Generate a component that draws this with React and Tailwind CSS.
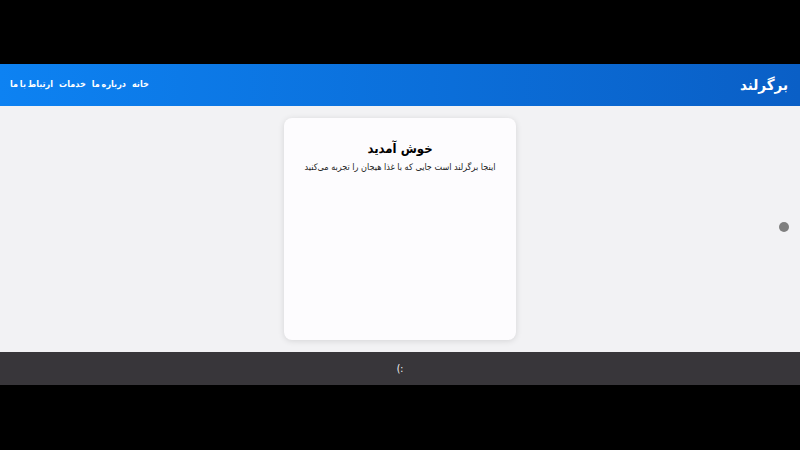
import React from 'react';

export default function App() {
  return (
    <div className="w-[800px] h-[450px] bg-black pt-[64px] overflow-hidden" dir="rtl" style={{ fontFamily: '"DejaVu Sans Condensed", "DejaVu Sans", sans-serif' }}>
      <header className="h-[42px] bg-gradient-to-l from-[#0a5fc6] to-[#0d82f2] flex items-center justify-between pr-[12px] pl-[10px] text-white">
        <div className="text-[15px] font-bold">برگرلند</div>
        <nav className="flex gap-[6px] text-[9px] font-bold [word-spacing:-1px]">
          <a>خانه</a>
          <a>درباره ما</a>
          <a>خدمات</a>
          <a>ارتباط با ما</a>
        </nav>
      </header>

      <main className="relative h-[246px] bg-[#f2f2f4] flex justify-center pt-[12px]">
        <div className="w-[232px] h-[222px] bg-[#fdfcfe] rounded-[8px] shadow-[0_1px_6px_rgba(0,0,0,0.12)] flex flex-col items-center pt-[23px]">
          <h1 className="text-[13px] font-bold text-black leading-tight">خوش آمدید</h1>
          <p className="mt-[4px] text-[9px] text-[#222]">اینجا برگرلند است جایی که با غذا هیجان را تجربه می‌کنید</p>
        </div>
        {/* dot on right edge */}
        <span className="absolute right-[11px] top-[116px] w-[10px] h-[10px] rounded-full bg-[#7f7f7f]"></span>
      </main>

      <footer className="h-[33px] bg-[#38363a] flex items-center justify-center text-white text-[10px]">
        :)
      </footer>
    </div>
  );
}
